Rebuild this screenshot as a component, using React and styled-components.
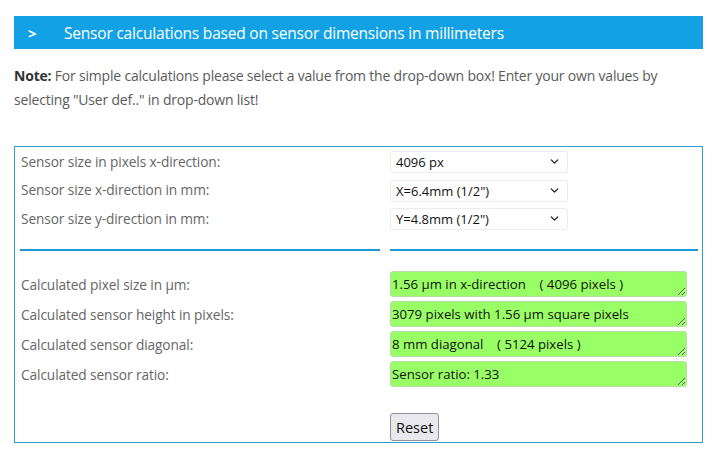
import React from "react";
import styled, { createGlobalStyle } from "styled-components";
import { ChevronDown } from "lucide-react";

const GlobalStyle = createGlobalStyle`
  body {
    margin: 0;
    background: #fff;
    font-family: "Open Sans", "Liberation Sans", sans-serif;
  }
`;

const selects = [
  { label: "Sensor size in pixels x-direction:", value: "4096 px" },
  { label: "Sensor size x-direction in mm:", value: 'X=6.4mm (1/2")' },
  { label: "Sensor size y-direction in mm:", value: 'Y=4.8mm (1/2")' },
];

const results = [
  { label: "Calculated pixel size in µm:", value: "1.56 µm in x-direction    ( 4096 pixels )" },
  { label: "Calculated sensor height in pixels:", value: "3079 pixels with 1.56 µm square pixels" },
  { label: "Calculated sensor diagonal:", value: "8 mm diagonal    ( 5124 pixels )" },
  { label: "Calculated sensor ratio:", value: "Sensor ratio: 1.33" },
];

export default function App() {
  return (
    <>
      <GlobalStyle />
      <Page>
        <Header>
          <Arrow>&gt;</Arrow>
          <HeaderTitle>Sensor calculations based on sensor dimensions in millimeters</HeaderTitle>
        </Header>
        <Note>
          <NoteLead>Note:</NoteLead> For simple calculations please select a value from the drop-down box! Enter your own values by
          <br />
          selecting "User def.." in drop-down list!
        </Note>
        <Panel>
          {selects.map(({ label, value }) => (
            <Row key={label} height={28.5}>
              <Label>{label}</Label>
              <SelectWrap>
                <Select defaultValue={value}>
                  <option>{value}</option>
                </Select>
                <Chevron size={13} strokeWidth={2.5} />
              </SelectWrap>
            </Row>
          ))}
          <Dividers>
            <Line />
            <Line />
          </Dividers>
          <Results>
            {results.map(({ label, value }) => (
              <Row key={label} height={26}>
                <Label>{label}</Label>
                <Output readOnly rows={1} defaultValue={value} />
              </Row>
            ))}
          </Results>
          <Row height={28}>
            <span />
            <div>
              <ResetButton>Reset</ResetButton>
            </div>
          </Row>
        </Panel>
      </Page>
    </>
  );
}

const Page = styled.div`
  padding: 16px 14px 0 14px;
`;

const Header = styled.div`
  height: 33px;
  background: #12a1e4;
  color: #fff;
  display: flex;
  align-items: center;
  padding-left: 14px;
`;

const Arrow = styled.span`
  font-weight: 700;
  font-size: 15px;
  width: 36px;
`;

const HeaderTitle = styled.span`
  font-size: 15.5px;
  letter-spacing: -0.2px;
`;

const Note = styled.p`
  margin: 15px 0 34px 0;
  font-size: 14px;
  line-height: 24px;
  color: #5a5a5a;
  letter-spacing: -0.2px;
`;

const NoteLead = styled.b`
  color: #333;
  font-weight: 700;
`;

const Panel = styled.div`
  border: 1px solid #2b9fd5;
  padding: 0 4px 1px 5px;
  display: flex;
  flex-direction: column;
`;

const Row = styled.div`
  display: grid;
  grid-template-columns: 360px 1fr;
  column-gap: 10px;
  align-items: center;
  height: ${(p) => p.height}px;
`;

const Label = styled.span`
  padding-left: 1px;
  font-size: 13.7px;
  color: #666;
  letter-spacing: -0.1px;
`;

const SelectWrap = styled.div`
  position: relative;
  width: 178px;
  height: 22px;
`;

const Select = styled.select`
  appearance: none;
  width: 100%;
  height: 100%;
  border: 1px solid #ececec;
  border-radius: 3px;
  background: #fff;
  padding: 0 0 0 5px;
  font-family: "Open Sans", sans-serif;
  font-size: 13px;
  color: #111;
  outline: none;
`;

const Chevron = styled(ChevronDown)`
  position: absolute;
  right: 7px;
  top: 5px;
  color: #222;
  pointer-events: none;
`;

const Dividers = styled.div`
  display: grid;
  grid-template-columns: 360px 1fr;
  column-gap: 10px;
  margin-top: 16.5px;
`;

const Line = styled.div`
  height: 2px;
  background: #1d9ad6;
`;

const Results = styled.div`
  display: flex;
  flex-direction: column;
  gap: 4px;
  margin: 20px 0 26px 0;
`;

const Output = styled.textarea`
  box-sizing: border-box;
  width: 297px;
  height: 26px;
  background: #99ff66;
  border: 1px solid #b8dca6;
  border-radius: 3px;
  padding: 3px 1px;
  font-family: "Open Sans", sans-serif;
  font-size: 13.2px;
  line-height: 18px;
  color: #111;
  overflow: hidden;
  white-space: pre;
  outline: none;
`;

const ResetButton = styled.button`
  height: 28px;
  padding: 0 5px;
  background: #e9e9ed;
  border: 1px solid #8f8f9d;
  border-radius: 3px;
  font-family: "Open Sans", sans-serif;
  font-size: 14.5px;
  color: #111;
`;
